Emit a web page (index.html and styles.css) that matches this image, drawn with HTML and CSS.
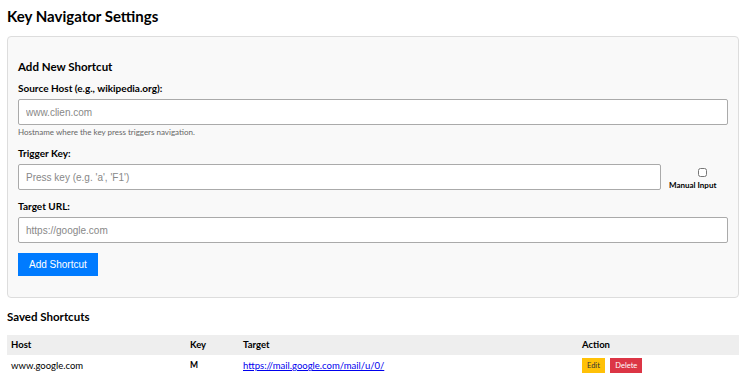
FILE: index.html
```html
<!DOCTYPE html>
<html lang="en">
<head>
    <meta charset="UTF-8">
    <meta name="viewport" content="width=device-width, initial-scale=1.0">
    <title>Key Navigator Settings</title>
    <link rel="stylesheet" href="styles.css">
</head>
<body>

    <h1>Key Navigator Settings</h1>

    <div class="card">
        <h2>Add New Shortcut</h2>

        <div class="field">
            <label for="host">Source Host (e.g., wikipedia.org):</label>
            <input type="text" id="host" placeholder="www.clien.com">
            <small class="hint">Hostname where the key press triggers navigation.</small>
        </div>

        <div class="field">
            <label for="key">Trigger Key:</label>
            <div class="key-row">
                <input type="text" id="key" placeholder="Press key (e.g. 'a', 'F1')">
                <div class="manual">
                    <input type="checkbox" id="manual">
                    <label for="manual">Manual Input</label>
                </div>
            </div>
        </div>

        <div class="field">
            <label for="target">Target URL:</label>
            <input type="text" id="target" placeholder="https://google.com">
        </div>

        <button class="add-button">Add Shortcut</button>
    </div>

    <h3>Saved Shortcuts</h3>
    <table>
        <thead>
            <tr>
                <th class="col-host">Host</th>
                <th class="col-key">Key</th>
                <th class="col-target">Target</th>
                <th class="col-action">Action</th>
            </tr>
        </thead>
        <tbody>
            <tr>
                <td>www.google.com</td>
                <td class="key">M</td>
                <td><a href="#">https://mail.google.com/mail/u/0/</a></td>
                <td>
                    <button class="edit-button">Edit</button>
                    <button class="delete-button">Delete</button>
                </td>
            </tr>
        </tbody>
    </table>

</body>
</html>
```

FILE: styles.css
```css
body {
    font-family: Lato, "Noto Sans", sans-serif;
    margin: 0;
    padding: 0 1px 0 7px;
    color: #000;
}
h1 {
    font-size: 15px;
    line-height: 19px;
    margin: 7px 0 10px;
}
.card {
    background-color: #f9f9f9;
    border: 1px solid #ddd;
    border-radius: 4px;
    padding: 20px 10px 21px 10px;
}
h2 {
    font-size: 11.5px;
    line-height: 15px;
    margin: 2px 0 8px;
}
.field {
    margin-bottom: 10px;
}
.field > label {
    display: block;
    font-size: 10px;
    line-height: 13px;
    font-weight: bold;
    margin-bottom: 4px;
}
input[type="text"] {
    display: block;
    width: 100%;
    box-sizing: border-box;
    height: 26px;
    padding: 4px 7px;
    font-family: "Liberation Sans", Arial, sans-serif;
    font-size: 10px;
    border: 1px solid #aaa;
    border-radius: 2px;
    background: #fff;
}
input::placeholder {
    color: #888;
}
.hint {
    display: block;
    font-size: 8px;
    line-height: 10px;
    color: #666;
    margin-top: 2px;
}
.key-row {
    display: flex;
    align-items: center;
    gap: 8px;
}
.key-row input[type="text"] {
    flex: 1;
}
.manual {
    display: flex;
    flex-direction: column;
    align-items: flex-start;
    width: 59px;
    padding-top: 4px;
}
.manual input {
    margin: 0 0 3px 29px;
    width: 9px;
    height: 9px;
}
.manual label {
    font-size: 8px;
    font-weight: bold;
    white-space: nowrap;
}
.add-button {
    display: block;
    background-color: #007bff;
    color: white;
    border: none;
    padding: 0 11px;
    height: 23px;
    font-family: "Liberation Sans", Arial, sans-serif;
    font-size: 10px;
    cursor: pointer;
}
h3 {
    font-size: 11.5px;
    line-height: 14px;
    margin: 12px 0 11px;
}
table {
    width: 100%;
    border-collapse: collapse;
    font-size: 9.5px;
    line-height: 13px;
}
th {
    background-color: #eee;
    text-align: left;
    padding: 3px 4px;
    height: 13px;
    line-height: 14px;
}
td {
    padding: 3px 4px;
}
.col-host { width: 171px; }
.col-key { width: 45px; }
.col-target { width: 331px; }
.key {
    font-size: 8.5px;
    font-weight: bold;
}
a {
    color: #0000ee;
}
.edit-button,
.delete-button {
    border: none;
    font-family: Lato, "Noto Sans", sans-serif;
    font-size: 7.5px;
    padding: 3px 5px;
    cursor: pointer;
}
.edit-button {
    background-color: #ffc107;
    color: #333;
}
.delete-button {
    background-color: #dc3545;
    color: white;
    margin-left: 3px;
}
```
